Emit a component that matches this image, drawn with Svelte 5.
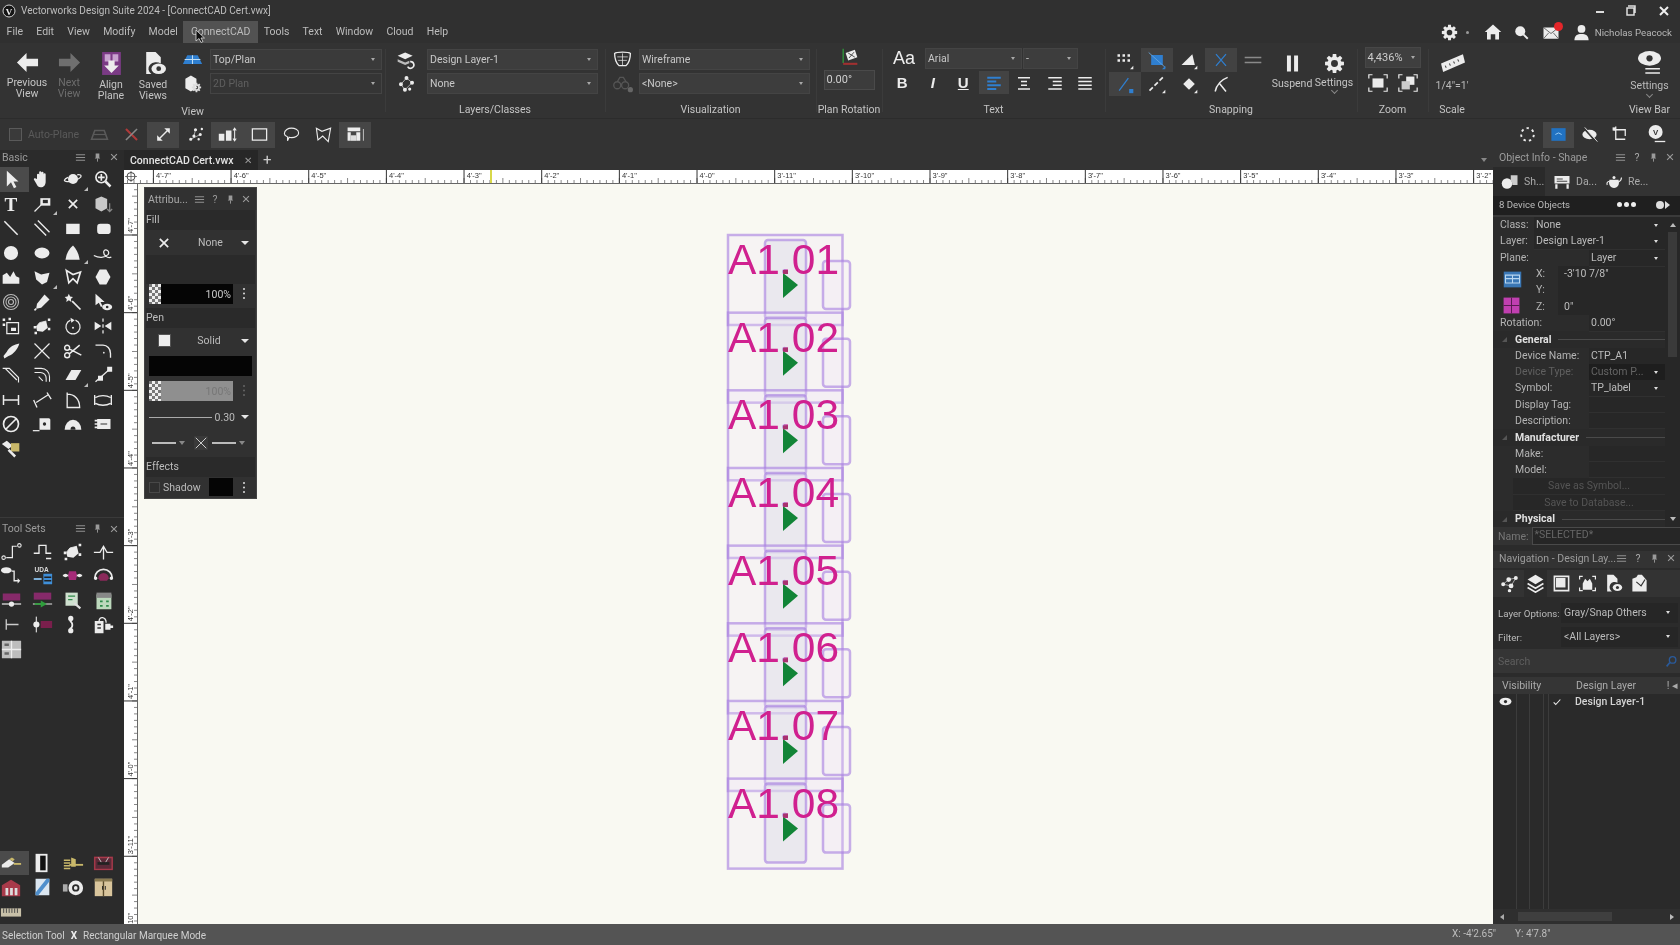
<script>
  const c = (x, y, r) => `M${x - r} ${y}a${r} ${r} 0 1 0 ${2 * r} 0a${r} ${r} 0 1 0 ${-2 * r} 0z`;
  const e = (x, y, a, b) => `M${x - a} ${y}a${a} ${b} 0 1 0 ${2 * a} 0a${a} ${b} 0 1 0 ${-2 * a} 0z`;
  function gear(x, y, r) {
    let d = '';
    for (let i = 0; i < 8; i++) {
      const a = (i * Math.PI) / 4;
      const p = (rad, off) => `${(x + rad * Math.cos(a + off)).toFixed(1)} ${(y + rad * Math.sin(a + off)).toFixed(1)}`;
      d += (i ? 'L' : 'M') + p(r * 0.72, -0.3) + 'L' + p(r, -0.18) + 'L' + p(r, 0.18) + 'L' + p(r * 0.72, 0.3);
    }
    return d + 'z' + c(x, y, r * 0.36);
  }
  const MAG = '#a52a78';
  const GRN = '#2f9e3c';
  const BLU = '#2f7fd0';
  const YEL = '#c9b86a';
  const RED = '#a83a4a';

  const icons = {
    // basic tools
    sel: [['f', 'M7 2v19l5-5 3.5 7 3-1.5-3.5-6.5h6z']],
    hand: [['f', 'M6 12V7a1.3 1.3 0 0 1 2.6 0v4V4a1.3 1.3 0 0 1 2.6 0v7V4.5a1.3 1.3 0 0 1 2.6 0V11V6.5a1.3 1.3 0 0 1 2.6 0V15c0 4-2 7-6 7-3 0-4-2-5-4l-3-5c-.8-1.5 1-2.5 2-1.5z']],
    planet: [['f', c(12, 12, 6)], ['s', 'M6 10C1 12 0 15 5 15c5 .5 13-2 16-5 2-3-1-3.500-4-3']],
    zoom: [['s', c(10, 10, 6.5), null, 2], ['f', 'M9 6h2v3h3v2h-3v3H9v-3H6V9h3z'], ['s', 'M15 15l6 6', null, 3]],
    txt: [['t', 'T', 12, 20, 23, null, 700, 'Liberation Serif']],
    callout: [['s', 'M3 21l8-8'], ['f', 'M10 5h12v9H10z'], ['f', 'M13 7h6v4h-6z', '#2b2b2b']],
    xmark: [['s', 'M7 7l10 10M17 7L7 17', null, 2]],
    cube: [['f', 'M3 6l7-3 7 3v11l-7 4-7-4z', '#c8c8c8'], ['s', 'M20 11v10M17 18l3 3 3-3', '#888']],
    line: [['s', 'M4 4l16 16', null, 1.8]],
    dbl: [['s', 'M3 7l14 14M7 3l14 14', null, 1.6]],
    rect: [['f', 'M4 6h17v13H4z']],
    rrect: [['f', 'M8 6h9q4 0 4 4v5q0 4-4 4H8q-4 0-4-4v-5q0-4 4-4z']],
    circ: [['f', c(12, 12, 8.5)]],
    ell: [['f', e(12, 12, 9, 6.5)]],
    sector: [['f', 'M12 3c4 4 7 10 8 17H3c1-7 4-13 9-17z']],
    loop: [['s', 'M1 15c6 3 13 3 17-1 3-4-3-8-5-4-1 4 4 9 9 7', null, 1.5]],
    poly: [['f', 'M2 20V10l5-3 4 5 4-7 3 6 4 2v7z']],
    poly2: [['f', 'M3 5l8 4 10-2-3 11-6 3-7-6z']],
    polyl: [['s', 'M4 4l8 5 9-3-4 13-5-5-5 5z', null, 2]],
    hex: [['f', 'M8 3h8l5 9-5 9H8l-5-9z']],
    spiral: [['s', c(12, 12, 9) + c(12, 12, 6) + c(12, 12, 3), '#bbb', 1.3]],
    dropper: [['f', 'M15 3l6 6-10 10-6 1 1-6z'], ['s', 'M5 20l-2 2', null, 2]],
    wand: [['f', 'M7 2l1.500 3.500 3.500.5-2.500 2.500.5 3.500L7 10l-3 2 .5-3.500L2 6l3.500-.5z'], ['s', 'M11 11l10 10', null, 2]],
    seleye: [['f', 'M3 2v14l4-3 2.500 5 2-1-2.500-5h5z'], ['f', e(17, 18, 6, 4)], ['f', c(17, 18, 1.6), '#2b2b2b']],
    offset: [['s', 'M7 8h14v13H7z', null, 1.5], ['f', 'M2 3h3v3H2zM2 9h3v3H2zM9 2h3v3H9zM12 14h6v4h-6z']],
    reshape: [['f', 'M5 13l4-5 8-2 2 8-6 5-7-1z'], ['s', 'M5 13l4-5 8-2', null, 1], ['f', 'M2 12h3v3H2zM19 3h3v3h-3zM3 19h3v3H3zM19 14h3v3h-3z']],
    rotate: [['s', 'M15 5a8.500 8.500 0 1 1-6 0', null, 1.5], ['f', 'M9 2l5 3-4 3z'], ['f', c(12, 14, 1.2)]],
    mirror: [['f', 'M2 7l8 5-8 5zM22 7l-8 5 8 5z'], ['s', 'M12 3v4M12 10v4M12 17v4', null, 1.5]],
    blade: [['f', 'M22 3C16 4 10 7 7 13l-4 5 1 3 5-3c6-2 11-8 13-15z']],
    cross: [['s', 'M3 3l18 18M21 3L3 21', null, 1.4]],
    scissors: [['s', c(5, 8, 3) + c(5, 17, 3) + 'M7.500 9.500L22 17M7.500 15.500L20 5', null, 1.7]],
    fillet: [['s', 'M3 5h9c5 0 9 4 9 10v5', null, 1.6], ['f', c(13, 14, 1)]],
    chamfer: [['s', 'M2 4h8l11 11v6M5 4l14 14', null, 1.4]],
    arcs: [['s', 'M3 4h8c6 0 10 5 10 10v6M3 9h7c4 0 7 3 7 7v4M8 14l5 5', null, 1.3]],
    eraser: [['f', 'M10 6h12l-7 12H3z']],
    connect: [['s', 'M3 20L20 5', null, 1.5], ['f', 'M17 2h6v6h-6zM6 13h6v6H6z']],
    dim: [['s', 'M3 6v12M21 6v12M3 12h18', null, 1.8]],
    dim2: [['s', 'M2 12l4 9M18 3l5 8M5 15l14-9', null, 1.6]],
    angle: [['s', 'M5 3v18h15C20 11 14 5 5 5z', null, 1.6]],
    dimarc: [['s', 'M2 6v12M22 6v12M3 9c5-3 13-3 18 0M3 16c5 3 13 3 18 0', null, 1.6]],
    nosym: [['s', c(12, 12, 9) + 'M6 18L18 6', null, 2]],
    tape: [['f', 'M9 5h11q2 0 2 2v12H9z'], ['s', 'M1 20h8'], ['f', c(15, 12, 2), '#2b2b2b']],
    protr: [['f', 'M2 19a10 12 0 0 1 20 0z'], ['f', 'M9 19a3 4 0 0 1 6 0z', '#2b2b2b']],
    film: [['f', 'M5 6h16v12H5zM2 7h3v2H2zM2 11h3v2H2zM2 15h3v2H2z'], ['s', 'M9 12h8', '#555']],
    roller: [['f', 'M1 6l6-4 7 6-5 4z'], ['f', 'M12 5h10v10H12z', YEL], ['s', 'M9 13l8 8', null, 3]],
    // tool sets
    tsconn: [['s', 'M6 19h7V6h5', null, 1.400], ['s', c(3, 19, 2) + c(21, 5, 2), null, 1.200]],
    tspulse: [['s', 'M2 14h6V5h8v9h6M16 20h6', null, 1.500]],
    tspeak: [['s', 'M1 13h7l4-7 4 7h7M12 6v15', null, 1.500]],
    tscable: [['f', e(6, 6, 6, 3.500)], ['s', 'M12 7h3v11h5', null, 1.500], ['f', 'M19 15l3 3-3 3z']],
    tsuda: [['t', 'UDA', 11, 8, 7.500, '#ddd', 700, 'Liberation Sans'], ['f', 'M13 10h10v12H13z', '#3f8fd8'], ['s', 'M2 16h9', '#8cc4f0', 2], ['s', 'M14 14h8M14 18h8', '#222']],
    tsmag: [['s', 'M1 12h22', null, 2], ['f', 'M8 7h8l1 5-1 5H8l-1-5z', MAG], ['f', c(4, 12, 2) + c(20, 12, 2)]],
    tsarch: [['s', 'M2 15a10 10 0 0 1 20 0', null, 2], ['f', 'M6 15a6 6 0 0 1 12 0l-2 3H8z', '#8a2a5a'], ['f', c(3, 15, 2) + c(21, 15, 2)]],
    tslbl: [['f', 'M2 4h20v8H2z', '#862a6a'], ['s', 'M1 16h22', '#ddd', 1.500], ['f', c(12, 16, 3)]],
    tsgrn: [['f', 'M2 3h20v8H2z', '#862a6a'], ['s', 'M1 16h22', '#bbb', 1.500], ['f', 'M10 12l7 4-7 4z', GRN], ['s', 'M3 16h9', GRN, 2]],
    tsfind: [['f', 'M4 3h14v15H4z', '#cfe0cf'], ['s', 'M7 7h8M7 11h5', '#2f8a4a', 1.500], ['s', 'M14 15l7 6', '#ddd', 2.500]],
    tsbox: [['f', 'M4 5h17v17H4z', '#bcd8bc'], ['f', 'M4 3h17v6H4z', '#888'], ['s', 'M8 13h3M8 18h3M15 13h3M15 18h3', '#2f8a4a', 2]],
    tst: [['s', 'M6 6v12M6 12h14', '#ccc', 1.500]],
    tsdot: [['s', 'M5 3v18', '#ccc', 1.500], ['f', c(5, 12, 3.500)], ['f', 'M10 8h13v8H10z', '#7a1f4c']],
    tslink: [['s', 'M9 8a5 5 0 0 1 0 9', null, 2], ['f', c(10, 5, 3) + c(10, 19, 3)]],
    tsplug: [['f', 'M2 8h10v14H2z'], ['s', 'M5 12h4M5 16h4', '#333', 1.500], ['s', 'M7 8c0-6 8-5 8 2', null, 1.500], ['f', 'M14 11h6v7h-6zM20 13h3v3h-3z']],
    tstable: [['f', 'M1 2h22v20H1z', '#bdbdbd'], ['s', 'M1 12h22M12 2v20', '#eee', 1.500], ['f', 'M4 5h5v3H4zM4 15h5v3H4z', '#666']],
    rj45: [['f', 'M2 14l8-6 6 4-7 5H2z'], ['f', 'M10 8l3-2 3 2-2 2z', YEL], ['s', 'M15 13h8', YEL, 2]],
    door: [['f', 'M5 2h13v20H5z'], ['f', 'M10 4h6v16h-6z', '#111']],
    ycable: [['s', 'M2 9h7M2 12h7M2 15h7M2 18h7', YEL, 1.800], ['s', 'M8 14h15', YEL, 2], ['f', 'M10 6l5 2v8h-5z', YEL]],
    patch: [['f', 'M2 5h21v15H2z', '#5a2a38'], ['s', 'M3 6h19v13H3z', RED, 1.500], ['f', 'M6 11h13v3H6z', '#222'], ['s', 'M7 6l3 5M18 6l-3 5', '#ccc', 1]],
    rack: [['f', 'M2 10l10-6 10 6v12H2z', RED], ['f', 'M6 13h3v8H6zM11 13h3v8h-3zM16 13h3v8h-3z', '#ddd']],
    zbox: [['f', 'M5 3h15v18H5z', '#dbe6f0'], ['f', 'M17 3h3v3L8 21H5v-3z', '#4f8fcc']],
    camera: [['f', e(15, 13, 8, 8)], ['f', c(15, 13, 4), '#2b2b2b'], ['f', c(15, 13, 2)], ['f', 'M1 9h5v8H1z', '#aaa']],
    cabinet: [['f', 'M3 3h19v19H3z', '#d9c59c'], ['s', 'M12.500 3v19', '#5a4a2a'], ['f', 'M3 3h19v3H3z', '#8a7a50'], ['f', 'M11 11h1v4h-1zM14 11h1v4h-1z', '#222']],
    ruler: [['f', 'M1 8h22v9H1z', '#c8c0a8'], ['s', 'M4 8v5M7 8v5M10 8v5M13 8v5M16 8v5M19 8v5', '#444', 1]],
    // ribbon
    prev: [['f', 'M1 12l10-10v6h12v8H11v6z']],
    next: [['f', 'M23 12L13 2v6H1v8h12v6z', '#6f6f6f']],
    align: [['f', 'M3 1h18v22H3z', '#7b3b85'], ['f', 'M5.500 3h5.500v7H5.500zM13 3h5.500v7H13z', '#c8a3cf'], ['f', 'M9 9h6v5h4l-7 7-7-7h4z']],
    saved: [['f', 'M5 1h9l5 5v6a7 6 0 0 0-9 10H5z'], ['f', e(17, 17, 7, 5)], ['f', c(17, 17, 2.300), '#333']],
    plane: [['f', 'M6 7h12l5 10H1z', BLU], ['s', 'M12 7v10M3 12h18', '#bcdcf5', 1.200]],
    gearcube: [['f', 'M3 6l7-4 7 4v12l-7 4-7-4z'], ['f', gear(17, 17, 6), '#ddd'], ['f', c(17, 17, 1), '#ddd']],
    layersp: [['f', 'M2 7l9-4 9 4-9 4z'], ['f', 'M2 11l9 4 5-2v3l-5 2-9-4z', '#bbb'], ['s', 'M17 14a4 4 0 1 1-3 6', null, 2]],
    classes: [['f', c(5, 13, 2.500) + c(12, 5, 2.500) + c(19, 11, 2.500) + c(10, 20, 2.500) + c(16, 19, 2)], ['s', 'M5 13l7-8 7 6-9 9z', null, .8]],
    teapot: [['s', 'M3 5c2-2 16-2 18 0 0 6-2 11-5 14H8C5 16 3 11 3 5z', null, 1.500], ['s', 'M6 9h12M7 13h10M12 5v14', null, .8]],
    glasses: [['s', c(6, 14, 4) + c(15, 14, 4) + 'M6 10l3-5h4l3 5', '#555', 1.500], ['f', c(21, 19, 3), '#666']],
    planrot: [['s', 'M5 1v17', GRN, 1.500], ['f', 'M8 6l11-4 3 9-11 4z'], ['s', 'M11 6l8 5M18 5l-6 7', '#333', 1], ['s', 'M5 19h17', '#a03030', 2.500]],
    alignl: [['s', 'M3 5h18M3 10h12M3 15h18M3 20h12', BLU, 2.400]],
    alignc: [['s', 'M4 5h16M8 10h8M8 15h8M4 20h16', null, 2.200]],
    alignr: [['s', 'M3 5h18M9 10h12M9 15h12M3 20h18', null, 2.200]],
    alignj: [['s', 'M3 5h18M3 10h18M3 15h18M3 20h18', null, 2.200]],
    snapgrid: [['f', 'M3 5h3v3H3zM9 5h3v3H9zM15 5h3v3h-3zM3 11h3v3H3zM9 11h3v3H9zM15 11h3v3h-3z'], ['f', 'M22 19v4h-4z']],
    snapobj: [['f', 'M5 6h14v12H5z', BLU], ['s', 'M2 3l20 18', '#6aa8e0', 1], ['f', 'M22 19v4h-4z', BLU]],
    snapang: [['f', 'M3 18L16 5l3 13z'], ['f', 'M22 19v4h-4z']],
    snapx: [['s', 'M6 5l12 14M18 5L6 19', BLU, 1.500]],
    snaplines: [['s', 'M2 9h20M2 15h20', '#8a8a8a', 2]],
    snapsmart: [['s', 'M5 20L16 5', BLU, 1.500], ['f', 'M17 18h5v5h-5z', BLU]],
    snapdash: [['s', 'M3 20l4-4M9 14l4-4M15 8l4-4', null, 2], ['f', 'M22 19v4h-4z']],
    snapdia: [['f', 'M12 5l7 7-7 7-7-7z'], ['f', 'M22 19v4h-4z']],
    snaptan: [['s', 'M5 21C7 12 12 7 20 4M10 11l8 10', null, 1.800]],
    pause: [['f', 'M5 2h5v20H5zM14 2h5v20h-5z']],
    gear: [['f', gear(12, 12, 11)]],
    zoomfit: [['s', 'M2 7V3h4M18 3h4v4M2 17v4h4M18 21h4v-4', null, 1.300], ['f', 'M6 7h12v10H6z']],
    zoomsel: [['s', 'M2 7V3h4M18 3h4v4M2 17v4h4M18 21h4v-4', null, 1.300], ['f', 'M10 5h9v9h-9z'], ['f', 'M5 10h9v9H5z', '#ccc']],
    scale: [['f', 'M1 13L22 4l2 8-21 9z'], ['s', 'M6 17l-1-2M10 15l-1-2M14 13l-1-2M18 11l-1-2', '#444', 1]],
    vbar: [['f', e(12, 8, 11, 7)], ['f', c(12, 8, 3), '#333'], ['s', 'M8 18h14M8 22h14', null, 1.500]],
    // top right
    home: [['f', 'M12 2L1 12h3v10h5v-7h6v7h5V12h3z']],
    search: [['f', c(10, 10, 8)], ['s', 'M15 15l7 7', null, 3]],
    mail: [['f', 'M2 6h20v15H2z'], ['s', 'M2 6l10 8 10-8M2 21l7-8M22 21l-7-8', '#444', 1]],
    user: [['f', c(12, 7, 5.500)], ['f', 'M2 23c0-7 4-9 10-9s10 2 10 9z']],
    // toolbar
    tplane: [['s', 'M6 7h12l4 11H2z', '#5a5a5a', 2], ['s', 'M4 12h16', '#5a5a5a', 1.500]],
    tred: [['s', 'M5 5l14 14', '#b03a3a', 2.600], ['s', 'M19 5L5 19', '#888', 2]],
    tdiag: [['s', 'M7 17L17 7', null, 1.800], ['f', 'M13 4h7v7zM4 13v7h7z']],
    tdots: [['f', c(6, 18, 2) + c(12, 6, 2) + c(18, 12, 2) + c(10, 14, 2) + c(16, 18, 1.500) + c(20, 5, 1.500)], ['s', 'M6 18L18 12M12 6l-2 8', null, .8]],
    tresize: [['f', 'M1 11h7v9H1zM10 7h7v13h-7z'], ['s', 'M21 4v16M19 7l2-3 2 3M19 17l2 3 2-3', null, 1.300]],
    trect: [['s', 'M3 5h18v14H3z', null, 1.600]],
    tlasso: [['s', 'M3 11c0-5 5-7 9-7s9 2 9 6-5 6-9 6c-1 0-2 0-3-.5L7 20v-5c-2-1-4-2-4-4z', null, 1.400]],
    tpolyl: [['s', 'M3 4l7 4 11-4-3 17-7-7-6 5z', null, 1.400]],
    tgroup: [['f', 'M2 3h16v5H2zM2 9h4v11H2zM13 9h5v11h-5z'], ['f', 'M6 20V13h7v7z', '#ddd'], ['s', 'M22 5v15', '#bbb', 1.300]],
    tcircle: [['s', c(12, 12, 8), null, 2.400, '3 4']],
    tblue: [['f', 'M3 4h18v16H3z', '#2172c2'], ['s', 'M8 12l4-2 4 2', '#9fd0f5', 1.200]],
    tslash: [['f', e(12, 12, 9, 6)], ['s', 'M4 3l16 18', '#333', 2], ['s', 'M6 3l16 18', '#ddd', 1.200]],
    tcrop: [['s', 'M6 2v16h12M3 6h15v8', null, 1.600], ['f', 'M2 3h4v4H2z']],
    tvbar: [['f', c(11, 9, 8)], ['t', 'V', 11, 12.500, 9, '#333', 700, 'Liberation Sans'], ['s', 'M10 20h12', null, 1.500]],
    // object info tabs
    oishape: [['f', c(8, 14, 7)], ['f', 'M13 3h9v13h-7a8 8 0 0 0-2-6z', '#ccc']],
    oidata: [['f', 'M2 4h20v10H2z'], ['s', 'M5 8h8M5 11h14', '#444', 1.300], ['f', 'M3 15h3v6H3zM18 15h3v6h-3z']],
    oiteapot: [['f', 'M6 9h12c2 6-1 11-6 11S4 15 6 9z'], ['f', c(12, 6, 2)], ['s', 'M18 12c2-1 4-4 4-6M6 11c-3 0-4 3-3 5', null, 1.500]],
    oiplane: [['f', 'M2 3h20v18H2z', '#3a77b5'], ['s', 'M4 7h16v9H4zM12 7v9M4 11h16', '#b8d6f0', 1.200]],
    oigrid: [['f', 'M2 2h20v20H2z', '#c03fb0'], ['s', 'M12 2v20M2 12h20', '#531a4c', 1.200]],
    // navigation
    navclass: [['f', c(4, 13, 2.500) + c(11, 7, 3) + c(20, 5, 2.500) + c(14, 15, 3) + c(12, 21, 2.200)], ['s', 'M4 13l7-6 9-2-6 10z', null, .8]],
    navlayers: [['f', 'M12 1l10 6-10 6L2 7z'], ['s', 'M2 12l10 6 10-6M2 17l10 6 10-6', null, 2]],
    navview: [['s', 'M3 3h18v18H3z', null, 2], ['f', 'M5 5h12v12H5z']],
    navframe: [['s', 'M2 7V3h4M18 3h4v4M2 17v4h4M18 21h4v-4', null, 1.500], ['f', 'M6 20v-8l3-6 3 3 3-3 3 6v8z']],
    navsaved: [['f', 'M4 1h8l5 5v5a6 6 0 0 0-7 11H4z'], ['f', e(17, 17, 6, 4.500)], ['f', c(17, 17, 2), '#333']],
    navsheet: [['f', 'M3 6l5-2 2-3h5l6 7v14H3z'], ['s', 'M8 10l6 5 5-8', '#333', 1.500]],
    eye: [['f', e(12, 12, 11, 7)], ['f', c(12, 12, 3), '#2b2b2b']],
    check: [['s', 'M4 13l5 5L20 6', null, 2.600]],
    glass: [['s', c(14, 9, 6), '#2a5a9a', 2.500], ['s', 'M9 14l-6 7', '#2a5a9a', 3]],
    menu: [['s', 'M2 6h20M2 12h20M2 18h20', '#9a9a9a', 2]],
    pin: [['f', 'M8 3h8v9l2 2H6l2-2z', '#9a9a9a'], ['s', 'M12 14v7', '#9a9a9a', 2]],
    close: [['s', 'M5 5l14 14M19 5L5 19', '#9a9a9a', 2.600]]
  };

  const menus = ['File', 'Edit', 'View', 'Modify', 'Model', 'ConnectCAD', 'Tools', 'Text', 'Window', 'Cloud', 'Help'];

  const basicTools = ['sel', 'hand', 'planet', 'zoom', 'txt', 'callout', 'xmark', 'cube', 'line', 'dbl', 'rect', 'rrect', 'circ', 'ell', 'sector', 'loop', 'poly', 'poly2', 'polyl', 'hex', 'spiral', 'dropper', 'wand', 'seleye', 'offset', 'reshape', 'rotate', 'mirror', 'blade', 'cross', 'scissors', 'fillet', 'chamfer', 'arcs', 'eraser', 'connect', 'dim', 'dim2', 'angle', 'dimarc', 'nosym', 'tape', 'protr', 'film', 'roller'];
  const flyouts = ['planet', 'callout', 'sector', 'poly2', 'eraser'];
  const toolSets = ['tsconn', 'tspulse', 'reshape', 'tspeak', 'tscable', 'tsuda', 'tsmag', 'tsarch', 'tslbl', 'tsgrn', 'tsfind', 'tsbox', 'tst', 'tsdot', 'tslink', 'tsplug', 'tstable'];
  const bottomSets = ['rj45', 'door', 'ycable', 'patch', 'rack', 'zbox', 'camera', 'cabinet', 'ruler'];

  const toolbarLeft = [['tplane'], ['tred'], ['tdiag', 1], ['tdots'], ['tresize', 1], ['trect', 1], ['tlasso'], ['tpolyl'], ['tgroup', 1]];
  const toolbarRight = [['tcircle'], ['tblue', 1], ['tslash'], ['tcrop']];

  const UNIT = 77.66;
  const hLabels = ["4'-7\"", "4'-6\"", "4'-5\"", "4'-4\"", "4'-3\"", "4'-2\"", "4'-1\"", "4'-0\"", "3'-11\"", "3'-10\"", "3'-9\"", "3'-8\"", "3'-7\"", "3'-6\"", "3'-5\"", "3'-4\"", "3'-3\"", "3'-2\""];
  const vLabels = ["4'-7\"", "4'-6\"", "4'-5\"", "4'-4\"", "4'-3\"", "4'-2\"", "4'-1\"", "4'-0\"", "3'-11\"", "3'-10\""];
  const hMinor = Array.from({ length: 230 }, (_, i) => i * (UNIT / 12));
  const vMinor = Array.from({ length: 126 }, (_, i) => i * (UNIT / 12));

  const devices = ['A1.01', 'A1.02', 'A1.03', 'A1.04', 'A1.05', 'A1.06', 'A1.07', 'A1.08'];

  const infoTop = [
    { l: 'Class:', v: 'None', wide: true, dd: true },
    { l: 'Layer:', v: 'Design Layer-1', wide: true, dd: true },
    { l: 'Plane:', v: 'Layer', dd: true, gap: true }
  ];
  const infoGeneral = [
    { sec: 'General' },
    { l: 'Device Name:', v: 'CTP_A1', ind: true },
    { l: 'Device Type:', v: 'Custom P...', ind: true, dd: true, dim: true },
    { l: 'Symbol:', v: 'TP_label', ind: true, dd: true },
    { l: 'Display Tag:', v: '', ind: true },
    { l: 'Description:', v: '', ind: true },
    { sec: 'Manufacturer' },
    { l: 'Make:', v: '', ind: true },
    { l: 'Model:', v: '', ind: true },
    { btn: 'Save as Symbol...' },
    { btn: 'Save to Database...' },
    { sec: 'Physical' }
  ];
</script>

{#snippet ic(name, size = 20)}
  <svg class="ic" width={size} height={size} viewBox="0 0 24 24" fill-rule="evenodd">
    {#each icons[name] as p}
      {#if p[0] === 'f'}
        <path d={p[1]} fill={p[2] || 'currentColor'} />
      {:else if p[0] === 's'}
        <path d={p[1]} fill="none" stroke={p[2] || 'currentColor'} stroke-width={p[3] || 1.5} stroke-dasharray={p[4]} />
      {:else}
        <text x={p[2]} y={p[3]} font-size={p[4]} fill={p[5] || 'currentColor'} font-weight={p[6]} font-family={p[7]} text-anchor="middle">{p[1]}</text>
      {/if}
    {/each}
  </svg>
{/snippet}

{#snippet panelBtns(help)}
  <span class="pbtns">
    {@render ic('menu', 11)}
    {#if help}<span class="q">?</span>{/if}
    {@render ic('pin', 11)}
    {@render ic('close', 10)}
  </span>
{/snippet}

{#snippet dropdown(text, cls = '')}
  <div class="dd {cls}"><span>{text}</span><i class="car"></i></div>
{/snippet}

<div class="app">
  <header class="titlebar">
    <svg class="logo" width="14" height="14" viewBox="0 0 14 14">
      <circle cx="7" cy="7" r="6" fill="#151515" stroke="#cfcfcf" />
      <text x="7" y="10.500" font-size="9" font-weight="700" font-family="Liberation Serif" text-anchor="middle" fill="#eee">V</text>
    </svg>
    <span class="title">Vectorworks Design Suite 2024 - [ConnectCAD Cert.vwx]</span>
    <div class="winbtns">
      <span class="wmin"></span>
      <svg width="12" height="12" viewBox="0 0 12 12"><path d="M3 1h7v7M2 3h7v7H2z" fill="none" stroke="#ddd" stroke-width="1.500" /></svg>
      <svg width="12" height="12" viewBox="0 0 12 12"><path d="M2 2l8 8M10 2l-8 8" fill="none" stroke="#eee" stroke-width="2" /></svg>
    </div>
  </header>

  <nav class="menubar">
    {#each menus as m}
      <span class="menu" class:hot={m === 'ConnectCAD'}>{m}</span>
    {/each}
    <svg class="cursor" width="10" height="14" viewBox="0 0 10 14"><path d="M1 1v11l3-2.500 2 4 2-1-2-3.500h3.500z" fill="#111" stroke="#ddd" stroke-width=".8" /></svg>
    <div class="account">
      <span class="acc a1">{@render ic('gear', 17)}</span>
      <i class="tiny"></i>
      <span class="acc a2">{@render ic('home', 18)}</span>
      <span class="acc a3">{@render ic('search', 15)}</span>
      <span class="acc a4">{@render ic('mail', 18)}<b class="reddot"></b></span>
      <span class="acc a5">{@render ic('user', 17)}</span>
      <span class="uname">Nicholas Peacock</span>
    </div>
  </nav>

  <section class="ribbon">
    <div class="grp" style="width:385px">
      <div class="body view">
        <div class="big">{@render ic('prev', 23)}<span>Previous<br />View</span></div>
        <div class="big off">{@render ic('next', 23)}<span>Next<br />View</span></div>
        <div class="big">{@render ic('align', 25)}<span>Align<br />Plane</span></div>
        <div class="big">{@render ic('saved', 25)}<span>Saved<br />Views</span></div>
        <div class="pair w36">
          <div class="pi blue">{@render ic('plane', 21)}</div>
          <div class="pi">{@render ic('gearcube', 19)}</div>
        </div>
        <div class="pair">
          {@render dropdown('Top/Plan', 'w172 flat')}
          {@render dropdown('2D Plan', 'w172 flat off')}
        </div>
      </div>
      <div class="lbl">View</div>
    </div>

    <div class="grp" style="width:220px">
      <div class="body">
        <div class="pair w42">
          <div class="pi">{@render ic('layersp', 20)}</div>
          <div class="pi">{@render ic('classes', 19)}</div>
        </div>
        <div class="pair">
          {@render dropdown('Design Layer-1', 'w171')}
          {@render dropdown('None', 'w171')}
        </div>
      </div>
      <div class="lbl">Layers/Classes</div>
    </div>

    <div class="grp" style="width:211px">
      <div class="body">
        <div class="pair w34">
          <div class="pi">{@render ic('teapot', 21)}</div>
          <div class="pi">{@render ic('glasses', 21)}</div>
        </div>
        <div class="pair">
          {@render dropdown('Wireframe', 'w171')}
          {@render dropdown('<None>', 'w171')}
        </div>
      </div>
      <div class="lbl">Visualization</div>
    </div>

    <div class="grp" style="width:66px">
      <div class="body rot">
        <div class="pi">{@render ic('planrot', 20)}</div>
        <div class="rotval">0.00°</div>
      </div>
      <div class="lbl">Plan Rotation</div>
    </div>

    <div class="grp" style="width:223px">
      <div class="body txt">
        <div class="txtrow top">
          <span class="aa">Aa</span>
          {@render dropdown('Arial', 'w97')}
          {@render dropdown('-', 'w55')}
        </div>
        <div class="txtrow">
          <span class="fmt b">B</span>
          <span class="fmt it">I</span>
          <span class="fmt u">U</span>
          <span class="fmt on">{@render ic('alignl', 18)}</span>
          <span class="fmt">{@render ic('alignc', 18)}</span>
          <span class="fmt">{@render ic('alignr', 18)}</span>
          <span class="fmt">{@render ic('alignj', 18)}</span>
        </div>
      </div>
      <div class="lbl">Text</div>
    </div>

    <div class="grp" style="width:252px">
      <div class="body snap">
        <div class="snapgrid">
          <span>{@render ic('snapgrid', 20)}</span>
          <span class="on">{@render ic('snapobj', 20)}</span>
          <span>{@render ic('snapang', 20)}</span>
          <span class="on">{@render ic('snapx', 20)}</span>
          <span>{@render ic('snaplines', 20)}</span>
          <span class="on">{@render ic('snapsmart', 20)}</span>
          <span>{@render ic('snapdash', 20)}</span>
          <span>{@render ic('snapdia', 20)}</span>
          <span>{@render ic('snaptan', 20)}</span>
        </div>
        <div class="big b40">{@render ic('pause', 19)}<span>Suspend</span></div>
        <div class="big b40">{@render ic('gear', 21)}<span>Settings</span><i class="chev"></i></div>
      </div>
      <div class="lbl">Snapping</div>
    </div>

    <div class="grp" style="width:71px">
      <div class="body zoom">
        <div class="zoomval"><span>4,436%</span><i class="car"></i></div>
        <div class="zoombtns">{@render ic('zoomfit', 22)}{@render ic('zoomsel', 22)}</div>
      </div>
      <div class="lbl">Zoom</div>
    </div>

    <div class="grp" style="width:48px">
      <div class="body scale">
        {@render ic('scale', 25)}
        <span>1/4"=1'</span>
      </div>
      <div class="lbl">Scale</div>
    </div>

    <div class="grp viewbar">
      <div class="body scale">
        {@render ic('vbar', 25)}
        <span>Settings</span>
        <i class="chev"></i>
      </div>
      <div class="lbl">View Bar</div>
    </div>
  </section>

  <section class="toolbar">
    <div class="autoplane"><i class="cb"></i><span>Auto-Plane</span></div>
    {#each toolbarLeft as [name, on]}
      <span class="tcell" class:on>{@render ic(name, 19)}</span>
    {/each}
    <div class="tright">
      {#each toolbarRight as [name, on]}
        <span class="tcell r" class:on>{@render ic(name, 19)}</span>
      {/each}
      <span class="tcell last">{@render ic('tvbar', 21)}</span>
    </div>
  </section>

  <main class="main">
    <aside class="left">
      <div class="lbasic">
        <div class="phead"><span>Basic</span>{@render panelBtns(false)}</div>
        <div class="tools">
          {#each basicTools as t, i}
            <span class="tool" class:sel={i === 0}>
              {@render ic(t, t === 'rect' || t === 'rrect' ? 19 : 20)}
              {#if flyouts.includes(t)}<i class="fly"></i>{/if}
            </span>
          {/each}
        </div>
      </div>
      <div class="lsets">
        <div class="phead"><span>Tool Sets</span>{@render panelBtns(false)}</div>
        <div class="tools">
          {#each toolSets as t}
            <span class="tool">{@render ic(t, 21)}</span>
          {/each}
        </div>
        <div class="tools bottom">
          {#each bottomSets as t, i}
            <span class="tool" class:sel={i === 0}>{@render ic(t, 22)}</span>
          {/each}
        </div>
      </div>
    </aside>

    <section class="center">
      <div class="tabs">
        <div class="tab"><b>ConnectCAD Cert.vwx</b><span class="tabx">✕</span></div>
        <span class="plus">+</span>
        <i class="tabmore"></i>
      </div>
      <div class="hruler">
        <svg width="1369" height="13">
          {#each hMinor as x, i}
            <line x1={29.4 + x - UNIT} x2={29.4 + x - UNIT} y1={i % 6 === 0 ? 8 : 10} y2="13" stroke="#555" stroke-width=".7" />
          {/each}
          {#each hLabels as t, i}
            <line x1={29.4 + i * UNIT} x2={29.4 + i * UNIT} y1="0" y2="13" stroke="#333" />
            <text x={32 + i * UNIT} y="8" class="rtxt">{t}</text>
          {/each}
          <rect x="366" y="0" width="2" height="13" fill="#d8d84a" />
          <circle cx="7" cy="6.500" r="4" fill="#fff" stroke="#444" />
          <path d="M7 1v11M1 6.500h12" stroke="#444" stroke-width=".7" />
        </svg>
      </div>
      <div class="work">
        <div class="vruler">
          <svg width="13" height="740">
            {#each vMinor as y, i}
              <line y1={51 + y - UNIT} y2={51 + y - UNIT} x1={i % 6 === 0 ? 8 : 10} x2="13" stroke="#555" stroke-width=".7" />
            {/each}
            {#each vLabels as t, i}
              <line y1={51 + i * UNIT} y2={51 + i * UNIT} x1="0" x2="13" stroke="#333" />
              <text transform="translate(9 {49 + i * UNIT}) rotate(-90)" class="rtxt">{t}</text>
            {/each}
          </svg>
        </div>
        <div class="canvas">
          <svg class="drawing" width="1356" height="740">
            {#each devices as name, k}
              <g transform="translate(0 {k * UNIT})">
                <rect x="590" y="51" width="114.500" height="90" class="dev outer" />
                <rect x="627" y="56" width="41" height="79" rx="3" class="dev inner" />
                <rect x="685" y="77" width="27" height="48" rx="3" class="dev side" />
                <text x="590" y="90" class="label">{name}</text>
                <rect x="645" y="86" width="15" height="28" rx="2" class="dev tiny" />
                <path d="M645 89l15 12-15 13z" fill="#128437" />
                <rect x="645" y="86" width="5" height="4" fill="#a8326e" />
              </g>
            {/each}
          </svg>

          <div class="attr">
            <div class="ahead"><span>Attribu...</span>{@render panelBtns(true)}</div>
            <div class="asec">Fill</div>
            <div class="arow h25">
              {@render ic('xmark', 20)}
              <span class="amid">None</span><i class="wcar"></i>
            </div>
            <div class="ablank"></div>
            <div class="abar black"><i class="chk"></i><span>100%</span><em class="vdots"></em></div>
            <div class="asec pen-sec">Pen</div>
            <div class="arow h25">
              <i class="pen"></i>
              <span class="amid">Solid</span><i class="wcar"></i>
            </div>
            <div class="ablackbar"></div>
            <div class="abar gray"><i class="chk"></i><span>100%</span><em class="vdots dim"></em></div>
            <div class="arow lw"><i class="hair"></i><span>0.30</span><i class="wcar"></i></div>
            <div class="arow h25 ends">
              <i class="hair s"></i><i class="gcar"></i>
              <span class="nolink">{@render ic('cross', 14)}</span>
              <i class="hair s"></i><i class="gcar"></i>
            </div>
            <div class="asec eff-sec">Effects</div>
            <div class="abar shadow"><i class="cb sm"></i><span>Shadow</span><b class="swatch"></b><em class="vdots"></em></div>
          </div>
        </div>
      </div>
    </section>

    <aside class="right">
      <div class="oi">
        <div class="phead"><span class="ptitle">Object Info - Shape</span>{@render panelBtns(true)}</div>
        <div class="oitabs">
          <span class="oitab on">{@render ic('oishape', 18)}<em>Sh...</em></span>
          <span class="oitab">{@render ic('oidata', 18)}<em>Da...</em></span>
          <span class="oitab">{@render ic('oiteapot', 18)}<em>Re...</em></span>
        </div>
        <div class="oicount">
          <span>8 Device Objects</span>
          <span class="dots"><i></i><i></i><i></i></span>
          <span class="toggle"><i></i><em></em></span>
        </div>
        <div class="oibody">
          <div class="oirows">
            {#each infoTop as r}
              <div class="row" class:wide={r.wide}>
                <span class="lab">{r.l}</span>
                <div class="val">{r.v}{#if r.dd}<i class="wd"></i>{/if}</div>
              </div>
            {/each}
            <div class="xyz">
              <div class="xyzicons">{@render ic('oiplane', 21)}{@render ic('oigrid', 19)}</div>
              <div class="xyzl"><span>X:</span><span>Y:</span><span>Z:</span></div>
              <div class="xyzv"><span>-3'10 7/8"</span><span></span><span>0"</span></div>
            </div>
            <div class="row"><span class="lab">Rotation:</span><div class="val">0.00°</div></div>
            {#each infoGeneral as r}
              {#if r.sec}
                <div class="section"><i class="tri"></i><b>{r.sec}</b><hr /></div>
              {:else if r.btn}
                <div class="savebtn">{r.btn}</div>
              {:else}
                <div class="row ind" class:dim={r.dim}>
                  <span class="lab">{r.l}</span>
                  <div class="val">{r.v}{#if r.dd}<i class="wd"></i>{/if}</div>
                </div>
              {/if}
            {/each}
          </div>
          <div class="oiscroll"><i class="up"></i><b></b><i class="down"></i></div>
        </div>
        <div class="oiname"><span>Name:</span><div>*SELECTED*</div></div>
      </div>

      <div class="nav">
        <div class="phead"><span class="ptitle">Navigation - Design Lay...</span>{@render panelBtns(true)}</div>
        <div class="navtabs">
          {@render ic('navclass', 19)}
          <span class="on">{@render ic('navlayers', 19)}</span>
          {@render ic('navview', 19)}
          {@render ic('navframe', 19)}
          {@render ic('navsaved', 19)}
          {@render ic('navsheet', 19)}
        </div>
        <div class="navrow"><span>Layer Options:</span><div class="navdd">Gray/Snap Others<i class="wd box"></i></div></div>
        <div class="navrow"><span>Filter:</span><div class="navdd">&lt;All Layers&gt;<i class="wd box"></i></div></div>
        <div class="navsearch"><span>Search</span>{@render ic('glass', 13)}</div>
        <div class="navhead"><span class="h1">Visibility</span><span class="h2">Design Layer</span><span class="h3">! ◂</span></div>
        <div class="navtable">
          <i class="vl l1"></i><i class="vl l2"></i><i class="vl l3"></i><i class="vl l4"></i>
          <div class="navline">
            <span class="eye">{@render ic('eye', 13)}</span>
            <span class="chk2">{@render ic('check', 10)}</span>
            <b>Design Layer-1</b>
          </div>
        </div>
        <div class="navscroll"><i class="sl"></i><b></b><i class="sr"></i></div>
      </div>
    </aside>
  </main>

  <footer class="status">
    <span>Selection Tool</span>
    <b>X</b>
    <span>Rectangular Marquee Mode</span>
    <span class="coord c1">X: -4'2.65"</span>
    <span class="coord c2">Y: 4'7.8"</span>
  </footer>
</div>

<style>
  :global(body) {
    margin: 0;
    background: #333;
  }
  .app {
    width: 1680px;
    height: 945px;
    overflow: hidden;
    display: flex;
    flex-direction: column;
    background: #333;
    color: #cdcdcd;
    font-family: Roboto, 'Liberation Sans', sans-serif;
    font-size: 10.5px;
    filter: blur(0.35px);
  }
  .ic {
    display: block;
    flex: none;
    color: #ececec;
  }

  .titlebar {
    height: 21px;
    flex: none;
    display: flex;
    align-items: center;
    padding-left: 2px;
    background: #303030;
  }
  .title {
    margin-left: 5px;
    color: #bdbdbd;
    font-size: 10px;
  }
  .winbtns {
    margin-left: auto;
    display: flex;
    gap: 21px;
    align-items: center;
    padding-right: 10px;
  }
  .wmin {
    width: 8px;
    height: 2px;
    background: #ddd;
    margin-top: 3px;
  }

  .menubar {
    height: 22px;
    flex: none;
    position: relative;
    display: flex;
    align-items: center;
    background: #303030;
    color: #bcbcbc;
  }
  .menu {
    padding: 0 6.6px;
    line-height: 22px;
  }
  .menu.hot {
    background: #525252;
    padding: 0 8px;
    margin: 0 -1.4px;
  }
  .cursor {
    position: absolute;
    left: 195px;
    top: 8px;
  }
  .account {
    position: absolute;
    right: 8px;
    top: 0;
    height: 22px;
    display: flex;
    align-items: center;
  }
  .acc {
    position: relative;
    display: block;
  }
  .a1 { margin-right: 8px; }
  .a2 { margin-left: 15px; }
  .a3 { margin-left: 12px; }
  .a4 { margin-left: 13px; }
  .a5 { margin-left: 13px; }
  .tiny {
    width: 3px;
    height: 3px;
    border-radius: 50%;
    background: #999;
  }
  .reddot {
    position: absolute;
    right: -3px;
    top: -1px;
    width: 9px;
    height: 9px;
    border-radius: 50%;
    background: #e4262a;
  }
  .uname {
    margin-left: 5px;
    color: #b8b8b8;
    font-size: 9.7px;
  }

  .ribbon {
    height: 76px;
    flex: none;
    display: flex;
    background: #333;
    border-bottom: 1px solid #2c2c2c;
    box-sizing: border-box;
  }
  .grp {
    display: grid;
    grid-template-rows: 1fr 19px;
    flex: none;
    height: 75px;
    position: relative;
  }
  .grp + .grp::before {
    content: '';
    position: absolute;
    left: 0;
    top: 6px;
    bottom: 6px;
    border-left: 1px solid #3b3b3b;
  }
  .grp.viewbar {
    width: 55px;
    margin-left: auto;
    margin-right: 3px;
  }
  .grp.viewbar::before {
    display: none;
  }
  .lbl {
    text-align: center;
    color: #c4c4c4;
    line-height: 21px;
    white-space: nowrap;
  }
  .body {
    display: flex;
    align-items: flex-start;
    padding-top: 6px;
  }
  .body.view {
    padding-left: 6px;
  }
  .big {
    width: 42px;
    padding-top: 2px;
    display: flex;
    flex-direction: column;
    align-items: center;
    text-align: center;
    line-height: 11px;
    color: #c4c4c4;
    position: relative;
    flex: none;
    white-space: nowrap;
  }
  .big span {
    margin-top: 3px;
  }
  .big.off {
    color: #6d6d6d;
  }
  .big.b40 {
    width: 40px;
    padding-top: 6px;
  }
  .big.b40 span {
    margin-top: 5px;
  }
  .big.b40 + .big.b40 {
    margin-left: 2px;
    padding-top: 5px;
  }
  .big.b40 + .big.b40 span {
    margin-top: 3px;
  }
  .chev {
    width: 4px;
    height: 4px;
    border-right: 1px solid #888;
    border-bottom: 1px solid #888;
    transform: rotate(45deg);
  }
  .pair {
    display: flex;
    flex-direction: column;
    gap: 3px;
  }
  .w36 { width: 36px; flex: none; }
  .w42 { width: 42px; flex: none; }
  .w34 { width: 34px; flex: none; }
  .pi {
    height: 21px;
    display: flex;
    align-items: center;
    justify-content: center;
  }
  .dd {
    height: 21px;
    box-sizing: border-box;
    display: flex;
    align-items: center;
    justify-content: space-between;
    padding: 0 6px 0 2px;
    background: #3d3d3d;
    border: 1px solid #444;
    color: #c8c8c8;
  }
  .dd.flat { background: #3a3a3a; }
  .dd.off { color: #5f5f5f; background: #353535; }
  .w172 { width: 172px; }
  .w171 { width: 171px; }
  .w97 { width: 97px; }
  .w55 { width: 55px; }
  .car {
    width: 0;
    height: 0;
    border: 2.5px solid transparent;
    border-top: 3px solid #a8a8a8;
    border-bottom: 0;
  }

  .rot {
    flex-direction: column;
    align-items: center;
    gap: 2px;
    padding-top: 4px;
  }
  .rotval {
    width: 51px;
    height: 20px;
    box-sizing: border-box;
    line-height: 18px;
    border: 1px solid #4a4a4a;
    background: #3c3c3c;
    padding-left: 2px;
    font-size: 11px;
    color: #d0d0d0;
  }

  .txt {
    flex-direction: column;
    gap: 3px;
    padding-top: 5px;
  }
  .txtrow {
    display: flex;
    align-items: center;
    height: 21px;
    padding-left: 5px;
  }
  .txtrow.top {
    padding-left: 11px;
    gap: 1px;
  }
  .aa {
    width: 31px;
    font-size: 18px;
    color: #eee;
    font-family: 'Liberation Sans', sans-serif;
  }
  .fmt {
    width: 30.5px;
    height: 23px;
    display: flex;
    align-items: center;
    justify-content: center;
    color: #ececec;
    font-size: 15px;
    font-family: 'Liberation Sans', sans-serif;
  }
  .fmt.on { background: #434343; }
  .fmt.b { font-weight: 700; }
  .fmt.it { font-style: italic; font-weight: 700; }
  .fmt.u { text-decoration: underline; font-weight: 700; }

  .snap {
    padding-left: 4px;
    padding-top: 5px;
  }
  .snapgrid {
    display: grid;
    grid-template-columns: repeat(5, 32px);
    grid-auto-rows: 24px;
    width: 160px;
    flex: none;
    margin-right: 3px;
  }
  .snapgrid span {
    display: flex;
    align-items: center;
    justify-content: center;
  }
  .snapgrid .on { background: #424242; }

  .zoom {
    flex-direction: column;
    align-items: center;
    gap: 4px;
    padding-top: 4px;
  }
  .zoomval {
    width: 56px;
    height: 21px;
    box-sizing: border-box;
    display: flex;
    align-items: center;
    justify-content: space-between;
    padding: 0 5px 0 2px;
    background: #3f3f3f;
    border: 1px solid #474747;
    font-size: 11px;
  }
  .zoombtns {
    display: flex;
    gap: 8px;
  }
  .scale {
    flex-direction: column;
    align-items: center;
    padding-top: 7px;
    white-space: nowrap;
  }
  .scale span {
    margin-top: 4px;
    color: #bbb;
  }

  .toolbar {
    height: 31px;
    flex: none;
    display: flex;
    align-items: center;
    background: #333;
  }
  .autoplane {
    width: 83px;
    flex: none;
    display: flex;
    align-items: center;
    gap: 6px;
    padding-left: 9px;
    box-sizing: border-box;
    color: #5a5a5a;
    white-space: nowrap;
  }
  .cb {
    width: 13px;
    height: 13px;
    box-sizing: border-box;
    border: 1px solid #5a5a5a;
    background: #3a3a3a;
    flex: none;
  }
  .tcell {
    width: 32px;
    height: 26px;
    flex: none;
    display: flex;
    align-items: center;
    justify-content: center;
  }
  .tcell.r { width: 31px; }
  .tcell.on { background: #464646; }
  .tcell.last { width: 40px; }
  .tright {
    margin-left: auto;
    display: flex;
    align-items: center;
    padding-right: 4px;
  }

  .main {
    flex: 1;
    display: flex;
    min-height: 0;
  }
  .left {
    width: 124px;
    flex: none;
    display: flex;
    flex-direction: column;
    background: #2b2b2b;
  }
  .lbasic {
    height: 368px;
    flex: none;
    border-bottom: 1px solid #3a3a3a;
    box-sizing: border-box;
  }
  .lsets {
    flex: 1;
    display: flex;
    flex-direction: column;
    min-height: 0;
  }
  .phead {
    height: 17px;
    box-sizing: border-box;
    padding: 0 5px 3px 2px;
    display: flex;
    align-items: center;
    justify-content: space-between;
    color: #9c9c9c;
  }
  .lsets .phead {
    height: 21px;
    padding-bottom: 0;
  }
  .pbtns {
    display: flex;
    align-items: center;
    gap: 6px;
    color: #9a9a9a;
  }
  .q {
    width: 10px;
    text-align: center;
    line-height: 11px;
  }
  .tools {
    display: grid;
    grid-template-columns: 26.7px repeat(3, 30.7px);
    grid-auto-rows: 24.5px;
  }
  .tools.bottom {
    margin-top: auto;
  }
  .tool {
    position: relative;
    display: flex;
    align-items: center;
    justify-content: center;
    box-sizing: border-box;
  }
  .tool:nth-child(4n + 1) {
    width: 29px;
    padding-right: 7px;
  }
  .tool.sel {
    background: #4b4b4b;
  }
  .fly {
    position: absolute;
    right: 0;
    bottom: 1px;
    border-left: 4px solid transparent;
    border-bottom: 4px solid #bbb;
  }

  .center {
    flex: 1;
    min-width: 0;
    display: flex;
    flex-direction: column;
  }
  .tabs {
    height: 20px;
    flex: none;
    display: flex;
    align-items: center;
    background: #333;
  }
  .tab {
    width: 134px;
    height: 20px;
    box-sizing: border-box;
    display: flex;
    align-items: center;
    justify-content: space-between;
    padding: 0 6px 0 6px;
    background: #272727;
    color: #e4e4e4;
    white-space: nowrap;
  }
  .tab b {
    font-weight: 500;
  }
  .tabx {
    color: #9a9a9a;
    font-size: 10px;
  }
  .plus {
    margin-left: 5px;
    font-size: 15px;
    line-height: 15px;
    color: #ccc;
  }
  .tabmore {
    margin-left: auto;
    margin-right: 6px;
    border: 3px solid transparent;
    border-top: 4px solid #888;
    border-bottom: 0;
  }
  .hruler {
    height: 13px;
    flex: none;
    background: #fff;
    border-bottom: 1px solid #666;
  }
  .hruler svg,
  .vruler svg {
    display: block;
  }
  .rtxt {
    font-size: 7.5px;
    fill: #333;
    font-family: 'Liberation Sans', sans-serif;
  }
  .work {
    flex: 1;
    display: flex;
    min-height: 0;
  }
  .vruler {
    width: 13px;
    flex: none;
    background: #fff;
    border-right: 1px solid #666;
    overflow: hidden;
  }
  .canvas {
    flex: 1;
    position: relative;
    overflow: hidden;
    background: #f9f9f2;
  }
  .drawing {
    position: absolute;
    inset: 0;
  }
  .dev {
    stroke: rgba(168, 128, 224, 0.62);
    stroke-width: 2.5;
  }
  .dev.outer { fill: rgba(238, 224, 248, 0.24); }
  .dev.inner { fill: rgba(222, 222, 234, 0.5); }
  .dev.side { fill: rgba(238, 224, 248, 0.2); }
  .dev.tiny { fill: rgba(228, 220, 240, 0.5); stroke-width: 2; }
  .label {
    font-family: 'Liberation Sans', sans-serif;
    font-size: 42.5px;
    fill: #d0208f;
  }

  .attr {
    position: absolute;
    left: 6px;
    top: 3px;
    width: 113px;
    height: 312px;
    box-sizing: border-box;
    padding: 0 1px;
    background: #313131;
    border: 1px solid #444;
    display: flex;
    flex-direction: column;
    color: #bcbcbc;
  }
  .ahead {
    height: 22px;
    flex: none;
    display: flex;
    align-items: center;
    justify-content: space-between;
    padding: 0 4px 0 2px;
    color: #a8a8a8;
  }
  .ahead .pbtns { gap: 5px; }
  .asec {
    height: 20px;
    flex: none;
    line-height: 20px;
    background: #2a2a2a;
  }
  .asec.pen-sec {
    margin-top: 4px;
  }
  .asec.eff-sec {
    margin-top: 2px;
  }
  .arow {
    display: flex;
    align-items: center;
    flex: none;
  }
  .h25 { height: 25px; }
  .arow > .ic { margin-left: 8px; }
  .amid {
    flex: 1;
    text-align: center;
    padding-left: 6px;
  }
  .wcar {
    margin-right: 6px;
    border: 4px solid transparent;
    border-top: 4px solid #e6e6e6;
    border-bottom: 0;
  }
  .ablank {
    height: 29px;
    flex: none;
    background: #2a2a2a;
  }
  .abar {
    height: 20px;
    flex: none;
    display: flex;
    align-items: center;
    position: relative;
    margin-left: 3px;
    margin-right: 22px;
  }
  .abar span { margin-left: auto; margin-right: 2px; }
  .abar.black { background: #050505; color: #ccc; }
  .abar.gray { background: #8f8f8f; color: #777; margin-top: 5px; }
  .chk {
    width: 12px;
    height: 20px;
    background: repeating-conic-gradient(#eee 0 25%, #777 0 50%) 0 0 / 6px 6px;
  }
  .vdots {
    position: absolute;
    right: -12px;
    top: 4px;
    width: 2px;
    height: 2px;
    border-radius: 50%;
    background: #ddd;
    box-shadow: 0 4.5px #ddd, 0 9px #ddd;
  }
  .vdots.dim {
    background: #666;
    box-shadow: 0 4.5px #666, 0 9px #666;
  }
  .pen {
    width: 13px;
    height: 13px;
    margin-left: 12px;
    background: #eee;
    border: 1px solid #555;
    box-sizing: border-box;
  }
  .ablackbar {
    height: 20px;
    flex: none;
    background: #050505;
    margin: 3px 3px 0;
  }
  .lw {
    height: 26px;
    margin-top: 3px;
    padding-left: 3px;
    gap: 3px;
    justify-content: space-between;
  }
  .hair {
    flex: 1;
    height: 1px;
    background: #aaa;
  }
  .hair.s {
    flex: none;
    width: 24px;
    height: 2px;
    background: #bbb;
  }
  .lw span { margin-right: 3px; }
  .ends {
    padding-left: 6px;
    gap: 3px;
  }
  .gcar {
    border: 3.5px solid transparent;
    border-top: 4px solid #888;
    border-bottom: 0;
    margin-right: 6px;
  }
  .nolink {
    display: block;
    background: #3a3a3a;
    margin-right: 1px;
  }
  .shadow {
    gap: 3px;
    margin-top: 1px;
    height: 18px;
  }
  .shadow span { margin: 0 auto 0 0; }
  .cb.sm {
    width: 11px;
    height: 11px;
    background: #2f2f2f;
    border-color: #484848;
  }
  .swatch {
    width: 24px;
    height: 18px;
    background: #050505;
    flex: none;
  }

  .right {
    width: 187px;
    flex: none;
    display: flex;
    flex-direction: column;
    background: #2b2b2b;
    color: #bdbdbd;
  }
  .ptitle {
    white-space: nowrap;
    padding-left: 4px;
  }
  .right .phead {
    background: #333;
  }
  .right .pbtns .q { color: #aaa; }
  .oi {
    height: 395px;
    flex: none;
    display: flex;
    flex-direction: column;
  }
  .oitabs {
    height: 29px;
    flex: none;
    display: flex;
    align-items: center;
    background: #333;
  }
  .oitab {
    width: 52px;
    height: 29px;
    display: flex;
    align-items: center;
    gap: 5px;
    padding-left: 8px;
    box-sizing: border-box;
    color: #aaa;
  }
  .oitab em { font-style: normal; }
  .oitab.on { background: #2a2a2a; }
  .oicount {
    height: 21px;
    flex: none;
    display: flex;
    align-items: center;
    padding: 0 10px 2px 6px;
    background: #1f1f1f;
    border-bottom: 2px solid #3a3a3a;
    box-sizing: border-box;
    color: #bbb;
    font-size: 9.6px;
  }
  .dots {
    margin-left: auto;
    display: flex;
    gap: 2px;
  }
  .dots i {
    width: 5px;
    height: 5px;
    border-radius: 50%;
    background: #eee;
  }
  .toggle {
    margin-left: 20px;
    display: flex;
    align-items: center;
    gap: 1px;
  }
  .toggle i {
    width: 8px;
    height: 8px;
    border-radius: 50%;
    background: #ddd;
  }
  .toggle em {
    border: 4px solid transparent;
    border-left: 5px solid #ddd;
    border-right: 0;
  }
  .oibody {
    flex: 1;
    display: flex;
    min-height: 0;
  }
  .oirows {
    flex: 1;
    min-width: 0;
    display: grid;
    grid-template-rows: repeat(3, 16.35px) 49px repeat(13, 16.35px);
    background: #2c2c2c;
    overflow: hidden;
  }
  .row {
    display: grid;
    grid-template-columns: 89px 1fr;
    align-items: stretch;
    padding-left: 7px;
    white-space: nowrap;
  }
  .row.ind {
    padding-left: 22px;
    grid-template-columns: 74px 1fr;
  }
  .row.wide {
    grid-template-columns: 34px 1fr;
  }
  .lab {
    line-height: 16px;
    color: #b4b4b4;
  }
  .row.dim .lab { color: #606060; }
  .val {
    position: relative;
    line-height: 16px;
    padding-left: 2px;
    background: #272727;
    color: #bcbcbc;
    border-bottom: 1px solid #303030;
  }
  .row.dim .val {
    background: #1e1e1e;
    color: #646464;
  }
  .wd {
    position: absolute;
    right: 7px;
    top: 7px;
    border: 2px solid transparent;
    border-top: 3px solid #ddd;
    border-bottom: 0;
  }
  .xyz {
    display: flex;
    height: 49px;
    padding-left: 9px;
  }
  .xyzicons {
    width: 34px;
    flex: none;
    display: flex;
    flex-direction: column;
    gap: 6px;
    padding-top: 3px;
  }
  .xyzl,
  .xyzv {
    display: grid;
    grid-auto-rows: 16.35px;
    line-height: 16px;
  }
  .xyzl { width: 22px; flex: none; color: #b4b4b4; }
  .xyzv { flex: 1; background: #272727; padding-left: 6px; }
  .section {
    display: flex;
    align-items: center;
    padding-left: 9px;
    gap: 7px;
    line-height: 16px;
    color: #e0e0e0;
    background: #2a2a2a;
  }
  .section b { white-space: nowrap; font-weight: 700; }
  .section hr {
    flex: 1;
    border: 0;
    border-top: 1px solid #4a4a4a;
    margin: 0;
  }
  .tri {
    width: 0;
    height: 0;
    border-left: 5px solid transparent;
    border-bottom: 5px solid #555;
    margin-right: 1px;
  }
  .savebtn {
    margin-left: 20px;
    text-align: center;
    line-height: 16px;
    color: #555;
    background: #272727;
    border-bottom: 1px solid #2f2f2f;
  }
  .oiscroll {
    width: 15px;
    flex: none;
    display: flex;
    flex-direction: column;
    align-items: center;
    background: #272727;
    padding: 6px 0;
    box-sizing: border-box;
  }
  .oiscroll b {
    flex: none;
    width: 9px;
    height: 125px;
    background: #3a3a3a;
    margin-top: 5px;
  }
  .oiscroll .up {
    border: 3.5px solid transparent;
    border-bottom: 4px solid #bbb;
    border-top: 0;
  }
  .oiscroll .down {
    margin-top: auto;
    border: 3.5px solid transparent;
    border-top: 4px solid #bbb;
    border-bottom: 0;
  }
  .oiname {
    height: 18px;
    flex: none;
    display: flex;
    align-items: center;
    padding-left: 5px;
    gap: 3px;
    background: #333;
    color: #777;
  }
  .oiname div {
    flex: 1;
    height: 18px;
    line-height: 13px;
    padding-left: 2px;
    box-sizing: border-box;
    border: 1px solid #4a4a4a;
    border-right: 0;
    background: #262626;
    color: #666;
  }
  .nav {
    flex: 1;
    display: flex;
    flex-direction: column;
    min-height: 0;
    background: #2b2b2b;
    padding-top: 6px;
  }
  .navtabs {
    height: 27px;
    margin-top: 2px;
    flex: none;
    display: flex;
    align-items: center;
    gap: 7px;
    padding-left: 7px;
    background: #333;
  }
  .navtabs span {
    padding: 4px 2px;
    background: #2c2c2c;
    margin: 0 -2px;
  }
  .navrow {
    height: 24px;
    flex: none;
    display: flex;
    align-items: center;
    padding-left: 5px;
    white-space: nowrap;
    color: #bbb;
  }
  .navrow:nth-of-type(3) { margin-top: 4px; }
  .navrow span {
    width: 63px;
    flex: none;
    font-size: 9.7px;
  }
  .navdd {
    position: relative;
    flex: 1;
    height: 20px;
    line-height: 19px;
    padding-left: 3px;
    background: #262626;
    margin-right: 2px;
  }
  .wd.box {
    right: 8px;
    top: 8px;
  }
  .navsearch {
    height: 24px;
    flex: none;
    display: flex;
    align-items: center;
    justify-content: space-between;
    padding: 0 2px 0 5px;
    margin-bottom: 4px;
    background: #353535;
    color: #5e5e5e;
  }
  .navhead {
    height: 17px;
    flex: none;
    position: relative;
    background: #353535;
    color: #aaa;
  }
  .navhead span {
    position: absolute;
    top: 2px;
  }
  .h1 { left: 9px; }
  .h2 { left: 83px; }
  .h3 { right: 2px; }
  .navtable {
    flex: 1;
    position: relative;
    background: #2a2a2a;
  }
  .vl {
    position: absolute;
    top: 0;
    bottom: 0;
    width: 1px;
    background: #3c3c3c;
  }
  .l1 { left: 23px; }
  .l2 { left: 36px; }
  .l3 { left: 50px; }
  .l4 { left: 55px; }
  .navline {
    position: relative;
    height: 15px;
    display: flex;
    align-items: center;
  }
  .eye { margin-left: 6px; }
  .chk2 { margin-left: 40px; }
  .navline b {
    margin-left: 13px;
    font-weight: 500;
    color: #d4d4d4;
  }
  .navscroll {
    height: 15px;
    flex: none;
    display: flex;
    align-items: center;
    padding: 0 6px 0 7px;
    background: #2f2f2f;
  }
  .navscroll b {
    width: 94px;
    height: 9px;
    background: #3f3f3f;
    margin-left: 14px;
  }
  .sl {
    border: 3.5px solid transparent;
    border-right: 4px solid #aaa;
    border-left: 0;
  }
  .sr {
    margin-left: auto;
    border: 3.5px solid transparent;
    border-left: 4px solid #bbb;
    border-right: 0;
  }

  .status {
    height: 21px;
    flex: none;
    display: flex;
    align-items: center;
    padding: 1px 0 0 2px;
    box-sizing: border-box;
    gap: 6px;
    background: #545454;
    color: #cfcfcf;
    position: relative;
    font-size: 10px;
  }
  .status b { color: #eee; }
  .coord {
    position: absolute;
    top: 4px;
    color: #bcbcbc;
  }
  .c1 { left: 1452px; }
  .c2 { left: 1515px; }
</style>
